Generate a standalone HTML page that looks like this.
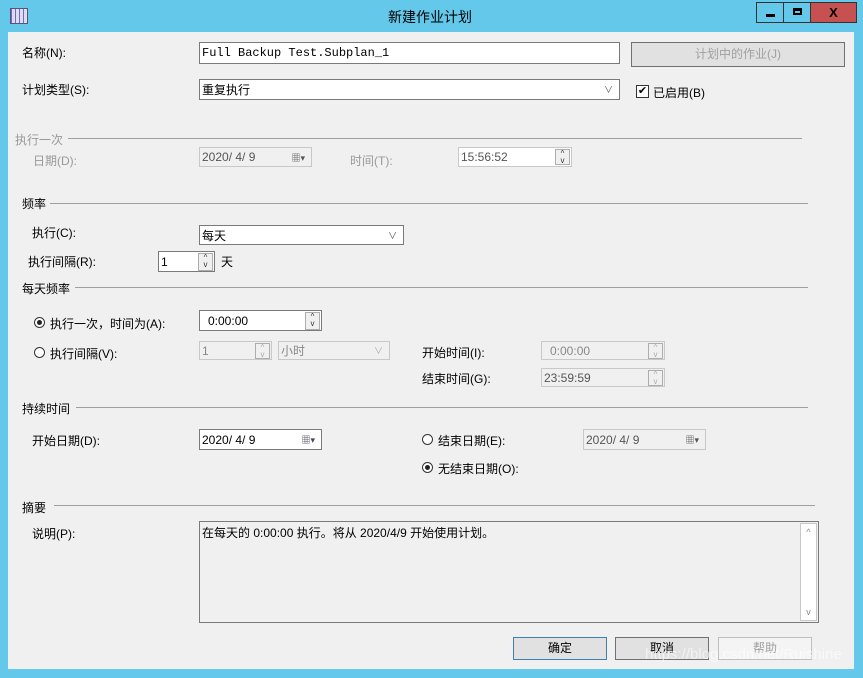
<!DOCTYPE html>
<html><head><meta charset="utf-8"><style>
body{margin:0;width:863px;height:678px;background:#63c8ea;font-family:"Liberation Sans","Noto Sans CJK SC",sans-serif;font-size:12px;color:#000;position:relative;overflow:hidden}
.a{position:absolute;white-space:nowrap}
.client{position:absolute;left:8px;top:32px;width:846px;height:637px;background:#f0f0f0}
.box{position:absolute;background:#fff;border:1px solid #7a7a7a;box-sizing:border-box;font-size:12px;padding-left:2px;display:flex;align-items:center;white-space:nowrap}
.dis{background:#f0f0f0;border-color:#c8c8c8;color:#888}
.line{position:absolute;height:1px;background:#a0a0a0}
.g{color:#999}
.rad{position:absolute;width:11px;height:11px;border:1px solid #333;border-radius:50%;background:#fff;box-sizing:border-box}
.rad.on::after{content:"";position:absolute;left:2px;top:2px;width:5px;height:5px;border-radius:50%;background:#222}
.btn{position:absolute;height:23px;border:1px solid #707070;background:#e1e1e1;box-sizing:border-box;text-align:center;line-height:21px}
.spin{position:absolute;right:1px;width:15px;box-sizing:border-box;border:1px solid #adadad;background:#f0f0f0;font-size:8px;text-align:center;line-height:7px;color:#333}
.arr{position:absolute;right:6px;font-size:9px;color:#555}
</style></head><body>
<div class="a" style="left:10px;top:8px;width:16px;height:14px;background:repeating-linear-gradient(90deg,#6d6dc8 0 1px,#dde 1px 4px),#eee;border:1px solid #557"></div>
<div class="a" style="left:388px;top:7px;font-size:14px">新建作业计划</div>
<div class="a" style="left:756px;top:2px;width:28px;height:21px;border:1px solid #333;box-sizing:border-box"><div class="a" style="left:9px;top:11px;width:9px;height:3px;background:#000"></div></div>
<div class="a" style="left:783px;top:2px;width:28px;height:21px;border:1px solid #333;box-sizing:border-box"><div class="a" style="left:9px;top:5px;width:9px;height:7px;border:2px solid #000;border-top-width:3px;box-sizing:border-box"></div></div>
<div class="a" style="left:810px;top:2px;width:47px;height:21px;border:1px solid #333;box-sizing:border-box;background:#c75050;text-align:center;font-weight:bold;font-size:13px;line-height:19px">X</div>
<div class="client"></div>

<div class="a" style="left:22px;top:44px">名称(N):</div>
<div class="box" style="left:199px;top:42px;width:421px;height:22px;font-family:'Liberation Mono',monospace">Full Backup Test.Subplan_1</div>
<div class="btn dis" style="left:631px;top:42px;width:214px;height:25px;line-height:23px;color:#a0a0a0">计划中的作业(J)</div>

<div class="a" style="left:22px;top:81px">计划类型(S):</div>
<div class="box" style="left:199px;top:79px;width:421px;height:21px">重复执行<span class="arr">∨</span></div>
<div class="a" style="left:636px;top:85px;width:13px;height:13px;border:1px solid #333;background:#fff;box-sizing:border-box;font-size:11px;line-height:11px;text-align:center">✔</div>
<div class="a" style="left:653px;top:84px">已启用(B)</div>

<div class="a g" style="left:15px;top:131px">执行一次</div><div class="line" style="left:68px;top:138px;width:734px"></div>
<div class="a g" style="left:33px;top:152px">日期(D):</div>
<div class="box dis" style="left:199px;top:147px;width:113px;height:20px;color:#555">2020/ 4/ 9<span class="arr">▦▾</span></div>
<div class="a g" style="left:350px;top:152px">时间(T):</div>
<div class="box dis" style="left:458px;top:147px;width:114px;height:20px;color:#555;background:#fff">15:56:52<div class="spin" style="top:1px;height:16px">^<br>v</div></div>

<div class="a" style="left:22px;top:195px">频率</div><div class="line" style="left:50px;top:203px;width:758px"></div>
<div class="a" style="left:32px;top:224px">执行(C):</div>
<div class="box" style="left:199px;top:225px;width:205px;height:20px">每天<span class="arr">∨</span></div>
<div class="a" style="left:28px;top:253px">执行间隔(R):</div>
<div class="box" style="left:158px;top:251px;width:57px;height:21px">1<div class="spin" style="top:1px;height:18px">^<br>v</div></div>
<div class="a" style="left:221px;top:253px">天</div>

<div class="a" style="left:22px;top:280px">每天频率</div><div class="line" style="left:75px;top:287px;width:733px"></div>
<div class="rad on" style="left:34px;top:317px"></div><div class="a" style="left:50px;top:315px">执行一次，时间为(A):</div>
<div class="box" style="left:199px;top:310px;width:123px;height:21px;padding-left:8px">0:00:00<div class="spin" style="top:1px;height:18px">^<br>v</div></div>
<div class="rad" style="left:34px;top:347px"></div><div class="a" style="left:50px;top:345px">执行间隔(V):</div>
<div class="box dis" style="left:199px;top:341px;width:73px;height:19px;background:#f0f0f0">1<div class="spin" style="top:1px;height:16px;color:#aaa">^<br>v</div></div>
<div class="box dis" style="left:278px;top:341px;width:112px;height:19px">小时<span class="arr" style="color:#aaa">∨</span></div>
<div class="a" style="left:422px;top:344px">开始时间(I):</div>
<div class="box dis" style="left:541px;top:341px;width:124px;height:19px;padding-left:8px">0:00:00<div class="spin" style="top:1px;height:16px;color:#aaa">^<br>v</div></div>
<div class="a" style="left:422px;top:370px">结束时间(G):</div>
<div class="box dis" style="left:541px;top:368px;width:124px;height:19px;color:#555">23:59:59<div class="spin" style="top:1px;height:16px;color:#aaa">^<br>v</div></div>

<div class="a" style="left:22px;top:400px">持续时间</div><div class="line" style="left:76px;top:407px;width:732px"></div>
<div class="a" style="left:32px;top:432px">开始日期(D):</div>
<div class="box" style="left:199px;top:429px;width:123px;height:21px">2020/ 4/ 9<span class="arr" style="color:#445">▦▾</span></div>
<div class="rad" style="left:422px;top:434px"></div><div class="a" style="left:438px;top:432px">结束日期(E):</div>
<div class="box dis" style="left:583px;top:429px;width:123px;height:21px;color:#555">2020/ 4/ 9<span class="arr">▦▾</span></div>
<div class="rad on" style="left:422px;top:462px"></div><div class="a" style="left:438px;top:460px">无结束日期(O):</div>

<div class="a" style="left:22px;top:499px">摘要</div><div class="line" style="left:54px;top:505px;width:761px"></div>
<div class="a" style="left:32px;top:525px">说明(P):</div>
<div class="box" style="left:199px;top:521px;width:620px;height:102px;background:#f0f0f0;align-items:flex-start;padding-top:2px">在每天的 0:00:00 执行。将从 2020/4/9 开始使用计划。
<div class="a" style="right:1px;top:1px;width:17px;height:98px;background:#fff;border:1px solid #c8c8c8;box-sizing:border-box;color:#888;text-align:center;font-size:9px;line-height:16px">^<div style="position:absolute;bottom:0;width:15px">v</div></div></div>

<div class="btn" style="left:513px;top:637px;width:94px;border-color:#3c7fb1">确定</div>
<div class="btn" style="left:615px;top:637px;width:94px">取消</div>
<div class="btn" style="left:718px;top:637px;width:94px;border-color:#bfbfbf;background:#f4f4f4;color:#a0a0a0">帮助</div>
<div class="a" style="left:645px;top:646px;font-size:15px;color:rgba(255,255,255,0.6)">https://blog.csdn.net/Ruishine</div>
</body></html>
